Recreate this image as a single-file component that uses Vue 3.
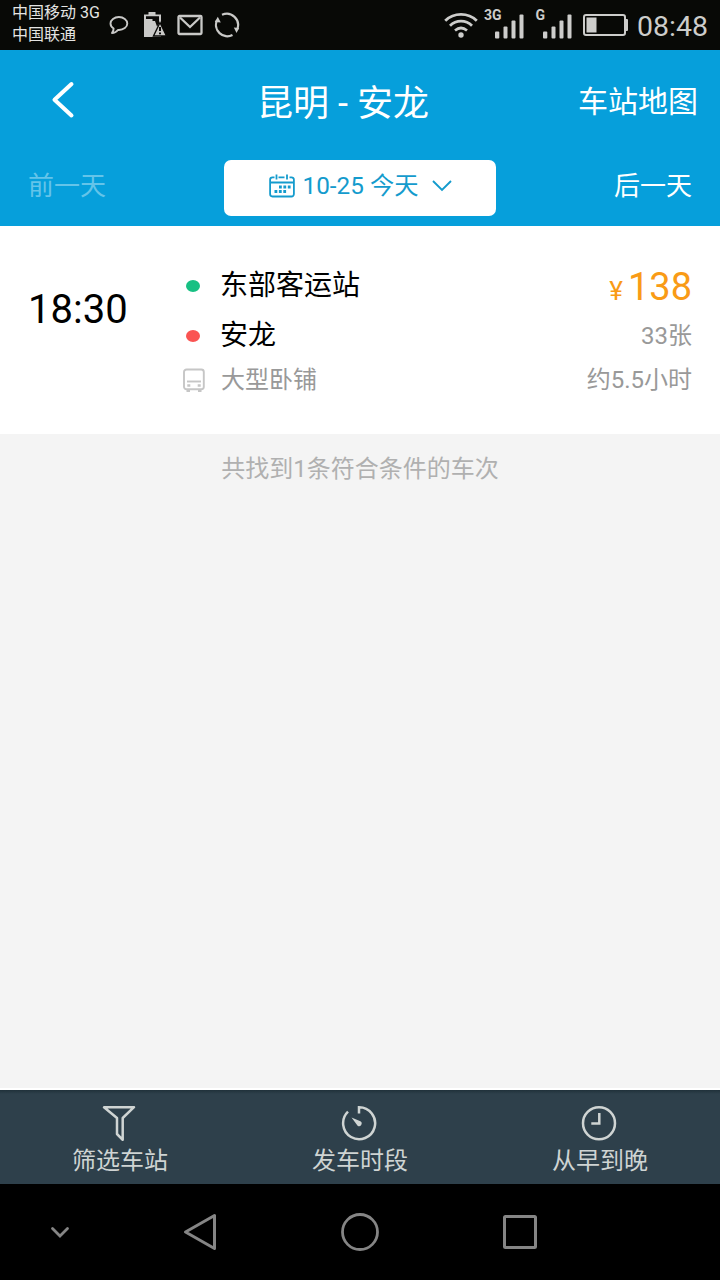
<template>
  <div class="screen">
    <div class="status-bar">
      <div class="carriers">
        <span>中国移动 3G</span>
        <span>中国联通</span>
      </div>
      <div class="notices">
        <svg width="20" height="20" viewBox="0 0 20 20" fill="none" stroke="#c9c9c7" stroke-width="1.9">
          <path d="M4.6 13.500C2.800 12.300 1.500 10.500 1.500 8.500 1.500 4.900 5.300 2 9.900 2s8.400 2.900 8.400 6.500-3.800 6.500-8.400 6.500h-1C7.500 16.800 5.500 18 3 18c1-1.400 1.700-2.900 1.600-4.500z" stroke-linejoin="round" />
        </svg>
        <svg width="24" height="26" viewBox="0 0 24 26">
          <path fill="#c9c9c7" d="M5.500 0h7v2.500H18V25H1V2.500h4.500z" />
          <path fill="#0a0a08" d="M3 4.300h13V12l-2 2.500-2-5.500H3z" />
          <path fill="#c9c9c7" d="M3 7h6.500v3H3z" />
          <path fill="#c9c9c7" stroke="#0a0a08" stroke-width="1.400" d="M17 10.500l6.500 13.500H10.500z" />
          <path stroke="#0a0a08" stroke-width="2" d="M17 15v4M17 20.500v1.800" />
        </svg>
        <svg width="26" height="22" viewBox="0 0 26 22" fill="none" stroke="#c9c9c7" stroke-width="2.300">
          <rect x="1.500" y="2" width="23" height="18" rx="1" />
          <path d="M3 3.500l10 9.500 10-9.500" />
        </svg>
        <svg width="28" height="28" viewBox="0 0 28 28" fill="none" stroke="#c9c9c7" stroke-width="2.200">
          <path d="M9 3.800a11.300 11.300 0 0 1 15.200 14.500M19.500 24a11.300 11.300 0 0 1-15.500-14.700" />
          <path d="M20.800 16.500l5.400 0.500-2.700 5zM1.800 11l3-5.200 3 5.700z" fill="#c9c9c7" stroke="none" />
        </svg>
      </div>
      <div class="system">
        <svg width="36" height="28" viewBox="0 0 36 28" fill="none" stroke="#cdcdcb" stroke-width="2.800">
          <path d="M2.200 9.800c8.800-8.500 22.800-8.500 31.600 0M7 14.700c6.200-6 15.800-6 22 0M12 19.500c3.700-3 8.300-3 12 0" />
          <circle cx="18" cy="24" r="2.700" fill="#cdcdcb" stroke="none" />
        </svg>
        <div v-for="net in networks" :key="net" class="signal">
          <span>{{ net }}</span>
          <svg width="30" height="26" viewBox="0 0 30 26" fill="#cdcdcb">
            <rect x="0" y="17.500" width="4.300" height="7" rx="1" />
            <rect x="8.500" y="12.500" width="4" height="12" rx="1" />
            <rect x="16.500" y="6.500" width="4" height="18" rx="1" />
            <rect x="24.500" y="0.500" width="4" height="24" rx="1" />
          </svg>
        </div>
        <svg class="battery" width="46" height="24" viewBox="0 0 46 24">
          <rect x="1" y="2" width="41" height="20" rx="2" fill="none" stroke="#cdcdcb" stroke-width="2" />
          <rect x="3.500" y="4.500" width="10" height="15" fill="#cdcdcb" />
          <rect x="42" y="6" width="3" height="12" rx="1" fill="#cdcdcb" />
        </svg>
        <span class="clock">08:48</span>
      </div>
    </div>

    <header>
      <div class="title-row">
        <svg class="back" width="24" height="38" viewBox="0 0 24 38">
          <path d="M20.500 3L3.500 18.800l17 15.700" fill="none" stroke="#fff" stroke-width="4" stroke-linecap="round" stroke-linejoin="round" />
        </svg>
        <h1>昆明 - 安龙</h1>
        <a class="map-link">车站地图</a>
      </div>
      <div class="date-row">
        <span class="prev">前一天</span>
        <button class="date-btn">
          <svg width="26" height="24" viewBox="0 0 26 24" fill="none" stroke="#149bcd" stroke-width="1.800">
            <path d="M5.500 3.300H3.500a2.400 2.400 0 0 0-2.400 2.400v14.400a2.400 2.400 0 0 0 2.400 2.400h19a2.400 2.400 0 0 0 2.400-2.400V5.700a2.400 2.400 0 0 0-2.400-2.400h-2M9.500 3.300h6M1.500 8.500h23M7.500 0.500v5M18 0.500v5" />
            <path d="M10 13h12M5.500 17.500h12" stroke-width="2.800" stroke-dasharray="2.800 1.600" />
          </svg>
          <span>10-25 今天</span>
          <svg class="chevron" width="20" height="14" viewBox="0 0 20 14">
            <path d="M1 2l9 9 9-9" fill="none" stroke="#149bcd" stroke-width="1.900" />
          </svg>
        </button>
        <span class="next">后一天</span>
      </div>
    </header>

    <main>
      <div v-for="trip in trips" :key="trip.time" class="trip">
        <div class="time">{{ trip.time }}</div>
        <div class="route">
          <div class="stop"><i class="dot from"></i>{{ trip.from }}</div>
          <div class="stop"><i class="dot to"></i>{{ trip.to }}</div>
          <div class="stop bus">
            <svg width="22" height="24" viewBox="0 0 22 24" fill="none" stroke="#c6c6c6" stroke-width="1.900">
              <rect x="1" y="1.500" width="19.800" height="19.800" rx="2.500" />
              <path d="M4 13.500h14" />
              <path d="M4.300 17.500h3M14.700 17.500h3M3.500 22.700h3.500M15 22.700h3.500" stroke-width="2.600" />
            </svg>
            <span>{{ trip.bus }}</span>
          </div>
        </div>
        <div class="fare">
          <div class="price"><small>¥</small>{{ trip.price }}</div>
          <div class="left">{{ trip.left }}张</div>
          <div class="duration">约{{ trip.hours }}小时</div>
        </div>
      </div>
      <p class="summary">共找到{{ trips.length }}条符合条件的车次</p>
    </main>

    <nav class="tools">
      <div class="tool">
        <svg width="36" height="38" viewBox="0 0 36 38" fill="none" stroke="#cfd4d3" stroke-width="2.500">
          <path d="M3 3.200h30L21.700 14v21.800L16 30V14z" stroke-linejoin="round" />
        </svg>
        <span>筛选车站</span>
      </div>
      <div class="tool">
        <svg width="36" height="38" viewBox="0 0 36 38" fill="none" stroke="#cfd4d3" stroke-width="2.500">
          <path d="M18 9.500V3.200a16 16 0 1 1-11 4.500" />
          <path d="M10.500 13.500l8.900 3.800a2.600 2.600 0 0 1-2.800 4.400z" fill="#cfd4d3" stroke="none" />
        </svg>
        <span>发车时段</span>
      </div>
      <div class="tool">
        <svg width="36" height="38" viewBox="0 0 36 38" fill="none" stroke="#cfd4d3" stroke-width="2.500">
          <circle cx="18" cy="19.200" r="16" />
          <path d="M18.300 9v10.500h-8" />
        </svg>
        <span>从早到晚</span>
      </div>
    </nav>

    <nav class="system-nav">
      <svg width="20" height="14" viewBox="0 0 20 14">
        <path d="M2.500 3.500l7.500 7.500 7.500-7.500" stroke-width="2.800" />
      </svg>
      <svg class="nav-back" width="34" height="38" viewBox="0 0 34 38">
        <path d="M31.500 2.500v33L2.500 19z" stroke-width="3" stroke-linejoin="round" />
      </svg>
      <svg width="40" height="40" viewBox="0 0 40 40">
        <circle cx="20" cy="20" r="17.500" stroke-width="2.800" />
      </svg>
      <svg width="36" height="36" viewBox="0 0 36 36">
        <rect x="2.500" y="2.500" width="31" height="31" rx="1" stroke-width="3" />
      </svg>
    </nav>
  </div>
</template>

<script setup>
import { ref } from 'vue'

const networks = ['3G', 'G']

const trips = ref([
  {
    time: '18:30',
    from: '东部客运站',
    to: '安龙',
    bus: '大型卧铺',
    price: 138,
    left: 33,
    hours: 5.5,
  },
])
</script>

<style>
body {
  margin: 0;
}
</style>

<style scoped>
.screen {
  display: flex;
  flex-direction: column;
  width: 720px;
  height: 1280px;
  overflow: hidden;
  background: #f4f4f4;
  font-family: Roboto, 'Noto Sans CJK SC', sans-serif;
}
svg {
  display: block;
  flex-shrink: 0;
}

/* Status bar */
.status-bar {
  display: flex;
  align-items: center;
  height: 50px;
  box-sizing: border-box;
  padding: 0 12px;
  background: #080906;
  color: #cdcdcb;
}
.carriers {
  display: flex;
  flex-direction: column;
  width: 97px;
  font-size: 16px;
  line-height: 22px;
  padding-bottom: 3px;
  white-space: nowrap;
  color: #e4e4e2;
}
.notices {
  display: flex;
  align-items: center;
  gap: 10px;
}
.notices svg:first-child {
  margin-right: 4px;
}
.system {
  display: flex;
  align-items: center;
  margin-left: auto;
}
.signal {
  display: flex;
  height: 30px;
  align-items: flex-end;
  margin-left: 5px;
}
.signal + .signal {
  margin-left: 10px;
}
.signal span {
  align-self: flex-start;
  margin: -2px -6px 0 0;
  font-size: 14px;
  line-height: 14px;
  font-weight: bold;
}
.signal + .signal span {
  margin-right: -2px;
}
.battery {
  margin: 0 8px 0 10px;
}
.clock {
  padding-top: 3px;
  font-size: 28.5px;
  line-height: 47px;
}

/* Header */
header {
  height: 176px;
  background: #069fdb;
  color: #fff;
}
.title-row {
  display: grid;
  grid-template-columns: 132px 1fr 150px;
  align-items: center;
  height: 100px;
  padding: 0 22px 0 51px;
}
h1 {
  margin: 0 0 0 -45px;
  font-size: 36px;
  font-weight: 400;
  text-align: center;
  white-space: nowrap;
}
.map-link {
  margin-top: -2px;
  font-size: 30px;
  text-align: right;
}
.date-row {
  display: flex;
  justify-content: space-between;
  padding: 10px 28px 0;
  font-size: 26px;
  line-height: 52px;
}
.prev {
  color: #64c4e9;
}
.date-btn {
  display: flex;
  align-items: center;
  justify-content: center;
  width: 272px;
  height: 56px;
  padding: 0 0 5px 1px;
  border: none;
  border-radius: 7px;
  background: #fff;
  color: #149bcd;
  font: inherit;
  font-size: 24.3px;
}
.date-btn span {
  margin: 0 14px 0 8px;
}

/* Trip list */
main {
  flex: 1;
  border-bottom: 2px solid #fff;
}
.trip {
  display: flex;
  height: 208px;
  box-sizing: border-box;
  padding: 34px 28px 0;
  background: #fff;
}
.time {
  width: 155px;
  padding-top: 26px;
  font-size: 40px;
  line-height: 48px;
}
.route {
  flex: 1;
}
.stop {
  display: flex;
  align-items: center;
  height: 50px;
  font-size: 28px;
  line-height: 49px;
}
.stop.bus {
  height: 40px;
  font-size: 24px;
  line-height: 40px;
  color: #999;
}
.bus svg {
  margin-right: 16px;
}
.bus span {
  margin-top: 0;
}
.dot {
  width: 14px;
  height: 12px;
  margin: 2px 20px 0 3px;
  border-radius: 50%;
}
.from {
  background: #17c083;
}
.to {
  background: #fa5452;
}
.fare {
  text-align: right;
  font-size: 24px;
  line-height: 42px;
  color: #999;
}
.price {
  height: 55px;
  line-height: 55px;
  font-size: 38px;
  color: #f99b16;
}
.price small {
  margin-right: 5px;
  font-size: 26px;
}
.left {
  height: 44px;
}
.summary {
  margin: 15px 0 0;
  text-align: center;
  font-size: 24px;
  line-height: 40px;
  color: #b0b0b0;
}

/* Filter bar */
.tools {
  display: flex;
  height: 94px;
  background: linear-gradient(#20313a, #2e404b 4px);
  color: #cfd4d3;
}
.tool {
  flex: 1;
  display: flex;
  flex-direction: column;
  align-items: center;
  padding-top: 14px;
  font-size: 24px;
  line-height: 38px;
}
.tool svg {
  margin-right: 2px;
}

/* Device navigation keys */
.system-nav {
  display: grid;
  grid-template-columns: 120px 160px 160px 160px;
  align-items: center;
  justify-items: center;
  height: 96px;
  background: #000;
}
.system-nav svg {
  fill: none;
  stroke: #858585;
  stroke-linecap: round;
}
</style>
